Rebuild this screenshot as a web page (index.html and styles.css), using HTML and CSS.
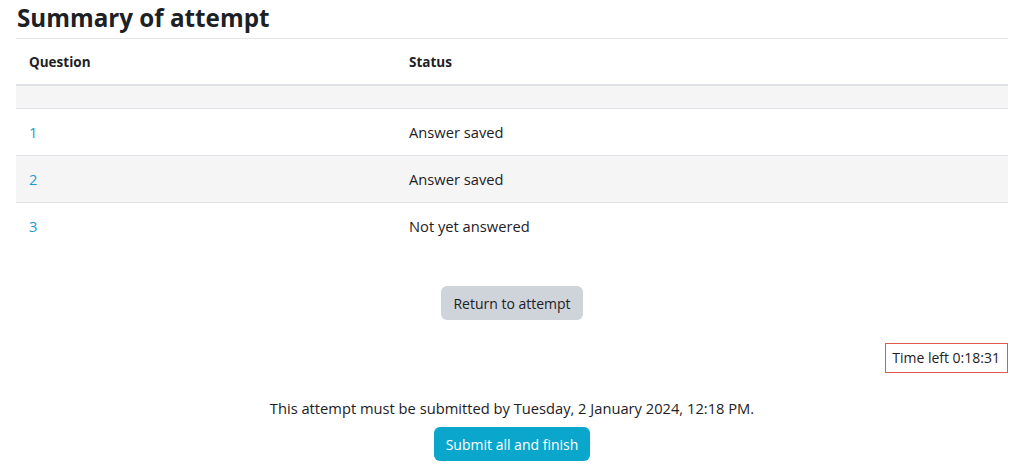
FILE: index.html
```html
<!DOCTYPE html>
<html lang="en">
<head>
    <meta charset="UTF-8">
    <meta name="viewport" content="width=device-width, initial-scale=1.0">
    <title>Summary of attempt</title>
    <link rel="stylesheet" href="styles.css">
</head>
<body>
    <div class="page">
        <h2 class="title">Summary of attempt</h2>
        <table class="summary">
            <thead>
                <tr>
                    <th class="col-q">Question</th>
                    <th>Status</th>
                </tr>
            </thead>
            <tbody>
                <tr class="spacer">
                    <td></td>
                    <td></td>
                </tr>
                <tr>
                    <td><a href="#">1</a></td>
                    <td>Answer saved</td>
                </tr>
                <tr>
                    <td><a href="#">2</a></td>
                    <td>Answer saved</td>
                </tr>
                <tr>
                    <td><a href="#">3</a></td>
                    <td>Not yet answered</td>
                </tr>
            </tbody>
        </table>

        <div class="controls">
            <button class="btn btn-secondary">Return to attempt</button>
        </div>

        <div class="timer-row">
            <div class="timer">Time left 0:18:31</div>
        </div>

        <div class="submit-box">
            <p class="deadline">This attempt must be submitted by Tuesday, 2 January 2024, 12:18 PM.</p>
            <button class="btn btn-primary">Submit all and finish</button>
        </div>
    </div>
</body>
</html>
```

FILE: styles.css
```css
body {
    font-family: "Open Sans", "Noto Sans", sans-serif;
    font-size: 14.7px;
    color: #1d2125;
    margin: 0;
    padding: 0;
    background: #fff;
}

.page {
    padding: 0 16px;
}

.title {
    font-size: 24.2px;
    font-weight: 700;
    margin: 0;
    padding: 2px 0 0 1px;
    height: 36px;
    line-height: 32px;
}

.summary {
    width: 100%;
    table-layout: fixed;
    border-collapse: collapse;
    border-top: 1px solid #e6e6e6;
}

.summary th,
.summary td {
    text-align: left;
    padding: 0 13px;
    height: 46px;
}

.summary th {
    font-weight: 700;
    font-size: 13.5px;
    border-bottom: 2px solid #dee2e6;
    height: 45px;
}

.summary .col-q {
    width: 354px;
}

.summary td {
    border-top: 1px solid #dee2e6;
}

.summary tbody tr:nth-child(odd) {
    background: #f5f5f5;
}

.summary tr.spacer td {
    height: 22px;
    border-top: none;
}

.summary a {
    color: #1a9bd0;
    text-decoration: none;
}

.controls {
    display: flex;
    justify-content: center;
    padding-top: 37px;
}

.btn {
    font-family: inherit;
    font-size: 14px;
    border: none;
    border-radius: 6px;
    padding: 0 12px;
    height: 34px;
    white-space: nowrap;
    cursor: pointer;
}

.btn-secondary {
    background: #ced4da;
    color: #1d2125;
}

.btn-primary {
    background: #0ba6cc;
    color: #fff;
}

.timer-row {
    display: flex;
    justify-content: flex-end;
    padding-top: 23px;
}

.timer {
    font-size: 14px;
    border: 1px solid #e2574c;
    padding: 0 7px 0 6px;
    height: 28px;
    line-height: 28px;
    white-space: nowrap;
}

.submit-box {
    display: flex;
    flex-direction: column;
    align-items: center;
    padding-top: 24px;
}

.deadline {
    margin: 0 0 8px;
    line-height: 22px;
}
```
